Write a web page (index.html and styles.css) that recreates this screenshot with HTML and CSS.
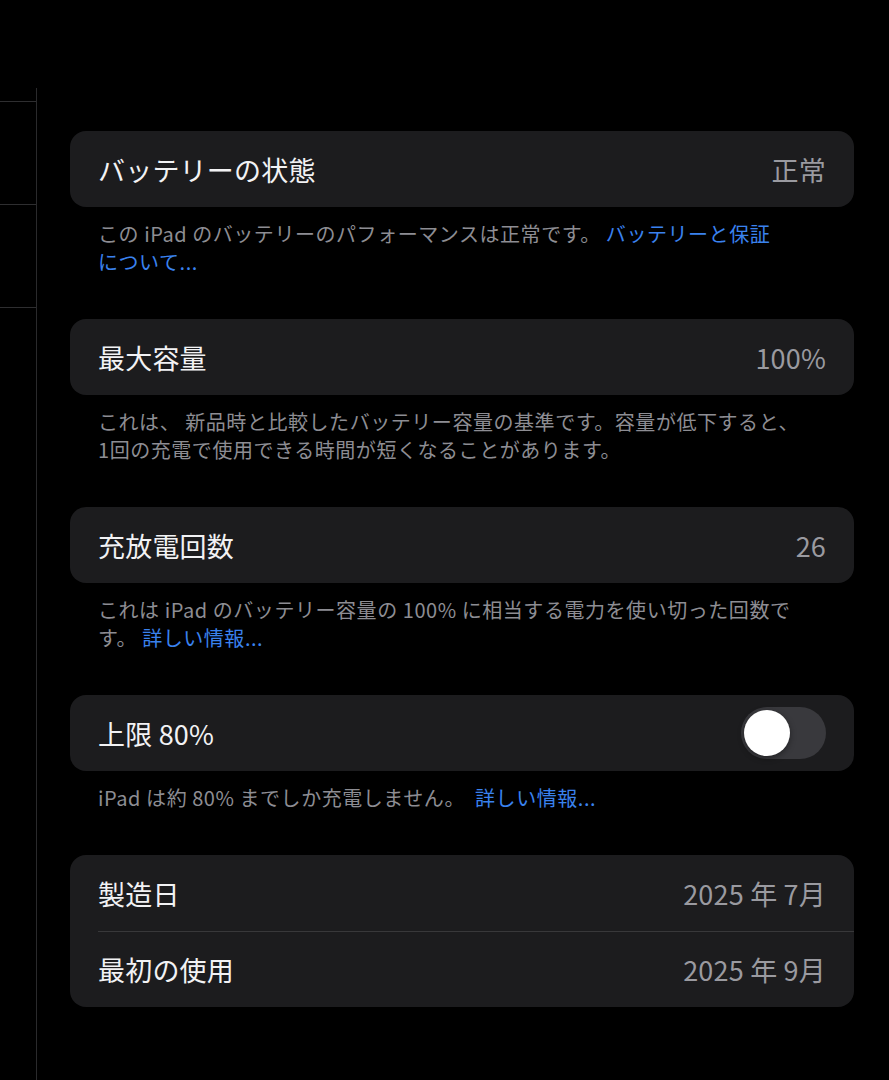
FILE: index.html
```html
<!DOCTYPE html>
<html lang="ja">
<head>
  <meta charset="UTF-8">
  <title>バッテリーの状態</title>
  <link rel="stylesheet" href="styles.css">
</head>
<body>

  <!-- SIDEBAR EDGE -->
  <div class="sidebar">
    <div class="sidebar-top"></div>
    <div class="sidebar-row"></div>
    <div class="sidebar-row"></div>
  </div>

  <!-- BATTERY DETAIL -->
  <div class="content">

    <div class="group">
      <div class="card">
        <div class="row">
          <span class="label">バッテリーの状態</span>
          <span class="value">正常</span>
        </div>
      </div>
      <p class="footer">この iPad のバッテリーのパフォーマンスは正常です。 <a class="link">バッテリーと保証<br>について...</a></p>
    </div>

    <div class="group">
      <div class="card">
        <div class="row">
          <span class="label">最大容量</span>
          <span class="value">100%</span>
        </div>
      </div>
      <p class="footer">これは、 新品時と比較したバッテリー容量の基準です。容量が低下すると、<br>1回の充電で使用できる時間が短くなることがあります。</p>
    </div>

    <div class="group">
      <div class="card">
        <div class="row">
          <span class="label">充放電回数</span>
          <span class="value">26</span>
        </div>
      </div>
      <p class="footer">これは iPad のバッテリー容量の 100% に相当する電力を使い切った回数で<br>す。 <a class="link">詳しい情報...</a></p>
    </div>

    <div class="group">
      <div class="card">
        <div class="row">
          <span class="label">上限 80%</span>
          <div class="toggle" id="limit-toggle"><div class="knob"></div></div>
        </div>
      </div>
      <p class="footer">iPad は約 80% までしか充電しません。 &nbsp;<a class="link">詳しい情報...</a></p>
    </div>

    <div class="group">
      <div class="card">
        <div class="row">
          <span class="label">製造日</span>
          <span class="value">2025 年 7月</span>
        </div>
        <div class="row">
          <span class="label">最初の使用</span>
          <span class="value">2025 年 9月</span>
        </div>
      </div>
    </div>

  </div>

  <script>
    const toggle = document.getElementById('limit-toggle');
    toggle.addEventListener('click', () => toggle.classList.toggle('on'));
  </script>
</body>
</html>
```

FILE: styles.css
```css
html, body {
  margin: 0;
  padding: 0;
  background: #000;
  color: #f2f2f4;
  font-family: "Noto Sans CJK JP", "Noto Sans", sans-serif;
}

body {
  display: flex;
  min-height: 1080px;
}

.sidebar {
  width: 36px;
  margin-top: 88px;
  border-right: 1px solid #2a2a2c;
  flex-shrink: 0;
}

.sidebar-top {
  height: 13px;
  border-bottom: 1px solid #2e2e30;
}

.sidebar-row {
  height: 102px;
  border-bottom: 1px solid #2e2e30;
}

.content {
  flex: 1;
  padding: 131px 35px 0 33px;
  display: flex;
  flex-direction: column;
  gap: 43px;
}

.card {
  background: #1c1c1e;
  border-radius: 16px;
  overflow: hidden;
}

.row {
  height: 76px;
  margin-left: 28px;
  padding-right: 28px;
  display: flex;
  align-items: center;
  justify-content: space-between;
  font-size: 27px;
  letter-spacing: 0.2px;
}

.row + .row {
  border-top: 1px solid #38383a;
  height: 75px;
}

.label {
  color: #f2f2f4;
}

.value {
  color: #9a9aa0;
}

.footer {
  margin: 13px 0 0;
  padding: 0 28px;
  font-size: 20px;
  line-height: 28px;
  color: #8d8d93;
  letter-spacing: 0.55px;
}

.link {
  color: #3a82ee;
  cursor: pointer;
}

.toggle {
  width: 85px;
  height: 52px;
  border-radius: 26px;
  background: #39393d;
  padding: 3px;
  box-sizing: border-box;
  cursor: pointer;
  display: flex;
}

.knob {
  width: 46px;
  height: 46px;
  border-radius: 50%;
  background: #fff;
  box-shadow: 0 2px 6px rgba(0, 0, 0, 0.4);
  transition: margin 0.2s;
}

.toggle.on {
  background: #30d158;
}

.toggle.on .knob {
  margin-left: 33px;
}
```
